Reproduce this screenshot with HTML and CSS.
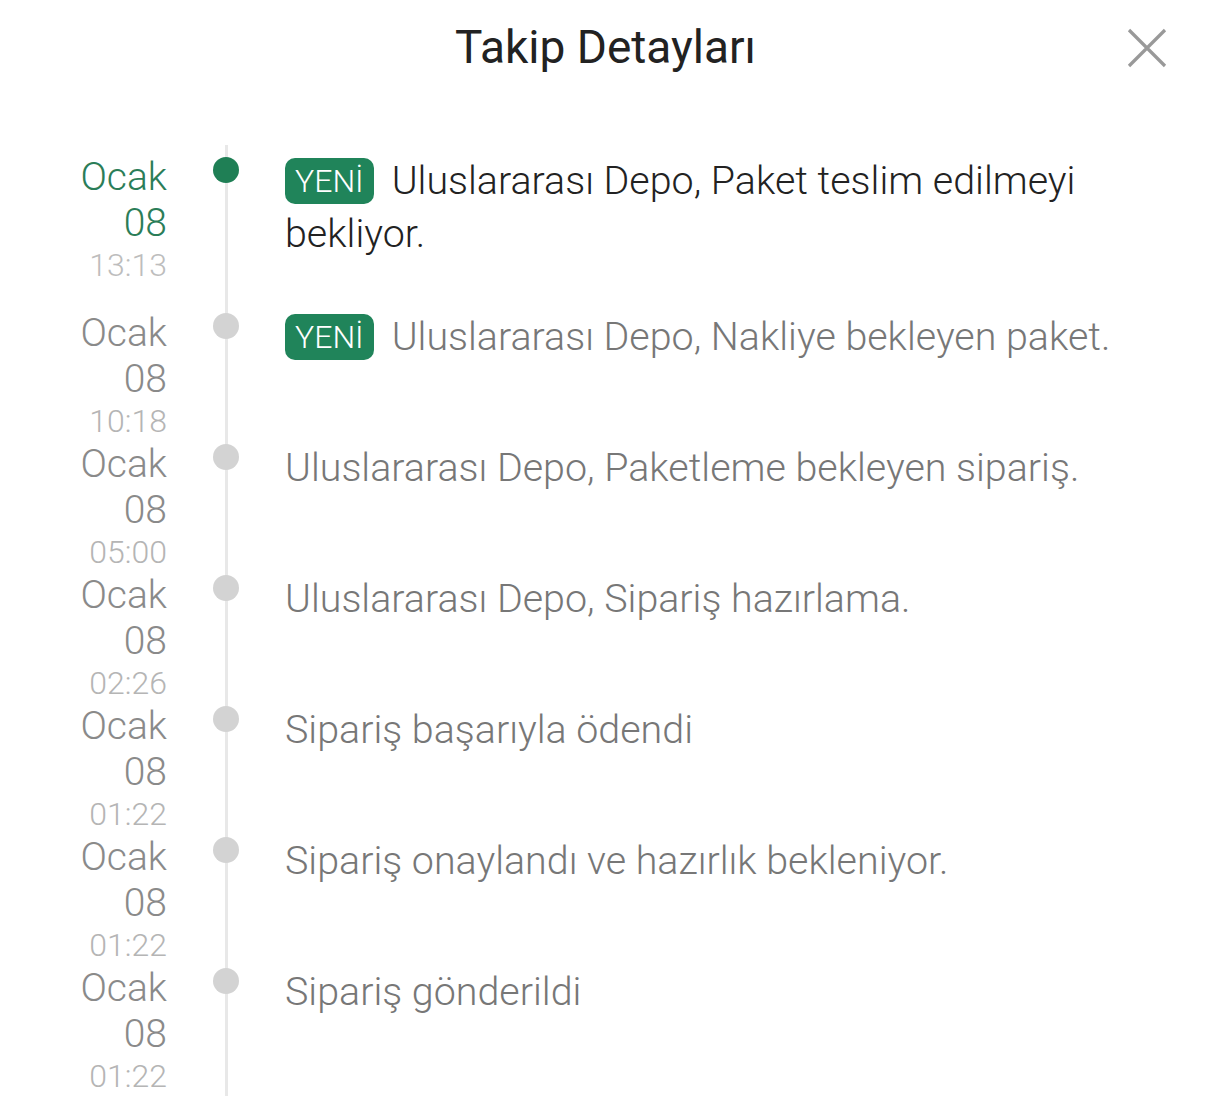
FILE: index.html
```html
<!DOCTYPE html>
<html lang="tr">
<head>
<meta charset="utf-8">
<title>Takip Detayları</title>
<link rel="stylesheet" href="styles.css">
</head>
<body>
<div class="sheet">
  <header class="header">
    <h1 class="title">Takip Detayları</h1>
    <button class="close" aria-label="Kapat">
      <svg width="40" height="40" viewBox="0 0 40 40"><path d="M2 2 L38 38 M38 2 L2 38" stroke="#999" stroke-width="3.2" fill="none"/></svg>
    </button>
  </header>
  <ol class="timeline">
    <li class="row active first">
      <div class="date"><span class="month">Ocak</span><span class="day">08</span><span class="time">13:13</span></div>
      <div class="axis"><span class="dot"></span></div>
      <div class="desc"><span class="badge">YENİ</span>Uluslararası Depo, Paket teslim edilmeyi bekliyor.</div>
    </li>
    <li class="row">
      <div class="date"><span class="month">Ocak</span><span class="day">08</span><span class="time">10:18</span></div>
      <div class="axis"><span class="dot"></span></div>
      <div class="desc"><span class="badge">YENİ</span>Uluslararası Depo, Nakliye bekleyen paket.</div>
    </li>
    <li class="row">
      <div class="date"><span class="month">Ocak</span><span class="day">08</span><span class="time">05:00</span></div>
      <div class="axis"><span class="dot"></span></div>
      <div class="desc">Uluslararası Depo, Paketleme bekleyen sipariş.</div>
    </li>
    <li class="row">
      <div class="date"><span class="month">Ocak</span><span class="day">08</span><span class="time">02:26</span></div>
      <div class="axis"><span class="dot"></span></div>
      <div class="desc">Uluslararası Depo, Sipariş hazırlama.</div>
    </li>
    <li class="row">
      <div class="date"><span class="month">Ocak</span><span class="day">08</span><span class="time">01:22</span></div>
      <div class="axis"><span class="dot"></span></div>
      <div class="desc">Sipariş başarıyla ödendi</div>
    </li>
    <li class="row">
      <div class="date"><span class="month">Ocak</span><span class="day">08</span><span class="time">01:22</span></div>
      <div class="axis"><span class="dot"></span></div>
      <div class="desc">Sipariş onaylandı ve hazırlık bekleniyor.</div>
    </li>
    <li class="row last">
      <div class="date"><span class="month">Ocak</span><span class="day">08</span><span class="time">01:22</span></div>
      <div class="axis"><span class="dot"></span></div>
      <div class="desc">Sipariş gönderildi</div>
    </li>
  </ol>
</div>
</body>
</html>
```

FILE: styles.css
```css
* { box-sizing: border-box; }
html, body { margin: 0; padding: 0; background: #fff; }
body { font-family: Roboto, "Noto Sans", Arial, sans-serif; color: #222; }

.sheet { width: 1211px; height: 1100px; overflow: hidden; }

.header {
  position: relative;
  height: 154px;
  display: flex;
  justify-content: center;
  padding-top: 19px;
}
.title {
  margin: 0;
  font-size: 46px;
  font-weight: 400;
  line-height: 56px;
  color: #222;
  letter-spacing: 0;
}
.close {
  position: absolute;
  top: 28px;
  right: 44px;
  width: 40px;
  height: 40px;
  padding: 0;
  border: 0;
  background: none;
}
.close svg { display: block; }

.timeline {
  list-style: none;
  margin: 0;
  padding: 0 0 0 60px;
}
.row {
  display: grid;
  grid-template-columns: 107px 118px 1fr;
}
.date {
  display: flex;
  flex-direction: column;
  align-items: flex-end;
  text-align: right;
  font-weight: 300;
  color: #8a8a8a;
}
.month, .day { font-size: 39px; line-height: 46px; }
.time { font-size: 32px; line-height: 39px; color: #b5b5b5; }
.row.active .month, .row.active .day { color: #2b7d58; }
.row.active .time { color: #bdbdbd; }

.axis {
  position: relative;
  display: flex;
  justify-content: center;
}
.axis::before {
  content: "";
  position: absolute;
  top: 0;
  bottom: 0;
  left: 50%;
  width: 3px;
  margin-left: -1.5px;
  background: #e8e8e8;
}
.row.first .axis::before { top: -9px; }
.dot {
  position: relative;
  width: 26px;
  height: 26px;
  border-radius: 50%;
  background: #d3d3d3;
  margin-top: 3px;
}
.row.active .dot { background: #1f7f55; }

.desc {
  font-size: 39.4px;
  font-weight: 300;
  line-height: 53px;
  color: #777;
  padding-bottom: 50px;
  padding-right: 80px;
}
.row.active .desc { color: #222; }
.badge {
  display: inline-block;
  vertical-align: 2px;
  background: #20845a;
  color: #fff;
  font-size: 32px;
  line-height: 46px;
  height: 46px;
  padding: 0 10px;
  border-radius: 10px;
  margin-right: 18px;
}
```
